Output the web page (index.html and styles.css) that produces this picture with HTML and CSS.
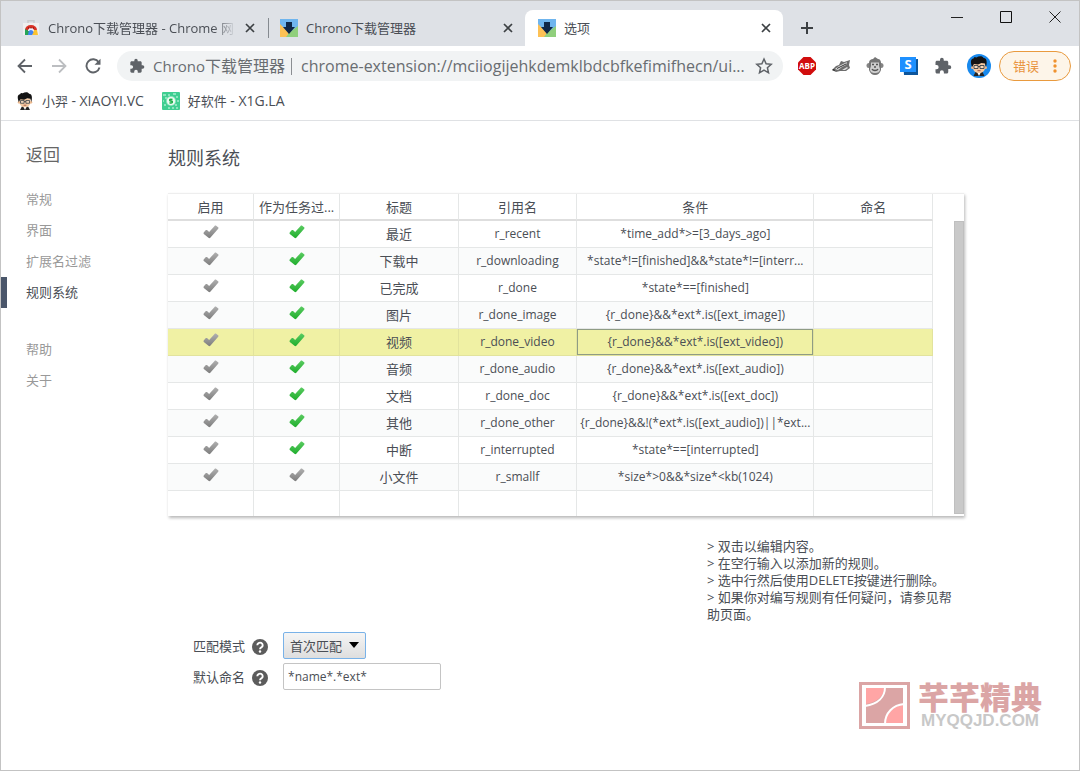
FILE: index.html
```html
<!DOCTYPE html>
<html lang="zh-CN">
<head>
<meta charset="utf-8">
<title>选项</title>
<link rel="stylesheet" href="styles.css">
</head>
<body>
<svg class="defs" aria-hidden="true">
  <defs>
    <linearGradient id="gray" x1="0" y1="0" x2="0" y2="1"><stop offset="0" stop-color="#b0b0b0"/><stop offset="1" stop-color="#7d7d7d"/></linearGradient>
    <linearGradient id="green" x1="0" y1="0" x2="0" y2="1"><stop offset="0" stop-color="#5bcb62"/><stop offset="1" stop-color="#1fae2c"/></linearGradient>
    <symbol id="tick" viewBox="0 0 16 14"><path d="M.7 7.6 2.6 5.3c.5-.5 1.2-.5 1.7-.1l1.8 1.9L11.6.9c.4-.5 1.1-.5 1.6-.1l1.9 1.5c.5.4.5 1 .1 1.5L7.3 12.7c-.5.6-1.3.6-1.8 0L.8 9c-.4-.4-.4-1-.1-1.400z"/></symbol>
    <symbol id="chrono" viewBox="0 0 18 18"><path fill="#6fb5ee" d="M0 0h18v18H0z"/><path fill="#fdc155" d="M0 5v13h7l2-4z"/><path fill="#90cf7c" d="M18 7v11H6l4-5z"/><path fill="#0f2747" d="M6 3h6v5h3l-6 7-6-7h3z"/></symbol>
    <symbol id="close" viewBox="0 0 12 12"><path d="m2 2 8 8m0-8-8 8" stroke="currentColor" stroke-width="1.7"/></symbol>
    <symbol id="puzzle" viewBox="0 0 24 24"><path fill="currentColor" d="M20.500 11H19V7c0-1.100-.9-2-2-2h-4V3.500a2.500 2.500 0 0 0-5 0V5H4c-1.100 0-2 .9-2 2v3.800h1.500a2.700 2.700 0 0 1 0 5.400H2V20c0 1.100.9 2 2 2h3.800v-1.500a2.700 2.700 0 0 1 5.400 0V22H17c1.100 0 2-.9 2-2v-4h1.500a2.500 2.500 0 0 0 0-5z"/></symbol>
    <symbol id="help" viewBox="0 0 16 16"><circle cx="8" cy="8" r="8" fill="#5c5c5c"/><path d="M5.300 6.200a2.700 2.500 0 1 1 4.300 2C8.500 9 8 9.300 8 10.200" fill="none" stroke="#fff" stroke-width="1.900"/><circle cx="8" cy="12.500" r="1.200" fill="#fff"/></symbol>
    <symbol id="face" viewBox="0 0 20 20"><path fill="#242424" d="M6.500 16h7l2 4h-11z"/><path fill="#fff" d="m8 16 2 4 2-4z"/><circle cx="3.500" cy="11.500" r="1.500" fill="#eab78d"/><circle cx="16.500" cy="11.500" r="1.500" fill="#eab78d"/><path fill="#f4c9a1" d="M4 7h12v5c0 3-3 5-6 5s-6-2-6-5z"/><path fill="#141414" d="M3 11C1 5 2 3 4.500 2.500L5.500 1l2 .4C10-.5 14-.2 14.500 2c3 0 4 3 2.500 9l-1-3.500-3.500-.5L9 8.500 5 8z"/><path fill="#f7d9bd" stroke="#26323e" stroke-width=".8" d="M5 9.500h4v3H5zm6 0h4v3h-4zM9 10.500h2"/><path d="M8.500 14.700h3" stroke="#a05648"/></symbol>
  </defs>
</svg>

<header class="chrome">
  <div class="tabstrip">
    <div class="tab">
      <svg class="fav" viewBox="0 0 18 18"><path fill="none" stroke="#c9cbce" stroke-width="1.500" d="M6 4V1.700h6V4"/><path fill="#efefef" d="M1 4h16v12H1z"/><path fill="#d93025" d="M3 11a6 5 0 0 1 12 0l-2 1H5z"/><path fill="#27a556" d="m3 10 4 2v4H3z"/><path fill="#fdc32f" d="m15 11 1 5h-6l2-5z"/><path fill="#eef3fd" d="M6 12a3 3 0 0 1 6 0z"/><path fill="#4285f4" d="M6.500 13.500a2.500 2.500 0 0 1 5 0L10 16H6z"/><path d="M6 9h1m1.500 0h1M11 9h1" stroke="#5c1712"/></svg>
      <span class="tab-title fade">Chrono下载管理器 - Chrome 网</span>
      <button class="tab-close" aria-label="关闭"><svg><use href="#close"/></svg></button>
    </div>
    <div class="tab divided">
      <svg class="fav"><use href="#chrono"/></svg>
      <span class="tab-title">Chrono下载管理器</span>
      <button class="tab-close" aria-label="关闭"><svg><use href="#close"/></svg></button>
    </div>
    <div class="tab active">
      <svg class="fav"><use href="#chrono"/></svg>
      <span class="tab-title">选项</span>
      <button class="tab-close" aria-label="关闭"><svg><use href="#close"/></svg></button>
    </div>
    <button class="new-tab" aria-label="新标签页"><svg viewBox="0 0 14 14"><path d="M7 1v12M1 7h12" stroke="#3c4043" stroke-width="2"/></svg></button>
    <div class="window-buttons">
      <button aria-label="最小化"><svg viewBox="0 0 12 12"><path d="M0 6.500h12" stroke="#222"/></svg></button>
      <button aria-label="最大化"><svg viewBox="0 0 12 12"><path d="M.5.5h11v11H.5z" fill="none" stroke="#111"/></svg></button>
      <button aria-label="关闭窗口"><svg viewBox="0 0 12 12"><path d="m.5.5 11 11m0-11-11 11" stroke="#222"/></svg></button>
    </div>
  </div>

  <div class="toolbar">
    <nav class="nav-buttons">
      <button aria-label="后退"><svg viewBox="0 0 16 16" fill="none" stroke="#5f6368" stroke-width="1.800"><path d="M15 8H2m6-6.500L1.500 8 8 14.500"/></svg></button>
      <button aria-label="前进"><svg viewBox="0 0 16 16" fill="none" stroke="#bcbec1" stroke-width="1.800"><path d="M1 8h13M8 1.500 14.500 8 8 14.500"/></svg></button>
      <button aria-label="重新加载"><svg viewBox="0 0 16 16"><path d="M13.700 4.300A6.600 6.600 0 1 0 14.500 9.500" fill="none" stroke="#5f6368" stroke-width="1.900"/><path fill="#5f6368" d="M15.500.8v6h-6z"/></svg></button>
    </nav>
    <div class="omnibox">
      <svg class="puzzle"><use href="#puzzle"/></svg>
      <span class="origin">Chrono<span class="origin-cn">下载管理器</span></span>
      <span class="bar"></span>
      <span class="url">chrome-extension://mciiogijehkdemklbdcbfkefimifhecn/ui...</span>
      <button class="star" aria-label="收藏"><svg viewBox="0 0 18 18"><path d="m9 2 2.100 4.700 5.100.6-3.800 3.400 1.100 5.100L9 13.200l-4.500 2.600 1.100-5.100-3.800-3.400 5.100-.6z" fill="none" stroke="#5f6368" stroke-width="1.500"/></svg></button>
    </div>
    <div class="extensions">
      <svg viewBox="0 0 18 18"><path fill="#d10d0d" d="M5.500 0h7L18 5.500v7L12.500 18h-7L0 12.500v-7z"/><text x="9" y="12" text-anchor="middle" class="abp">ABP</text></svg>
      <svg viewBox="0 0 18 18"><path fill="#6d6d6d" d="m0 13 4-4 3-1 2-4 3 1 6-2-1 5 1 3-4 3H8l-4 1z"/><path fill="#dcdcdc" d="m3 12 4-3 4-2 4-2-1 3-4 2-4 3zM10 13l5-3 1 1-3 2z"/><path d="m5 11.500 5-2.500 4-2" stroke="#353535"/><path fill="#222" d="m0 13 2-1 1 2z"/></svg>
      <svg viewBox="0 0 18 18"><circle cx="3" cy="8.500" r="2.500" fill="#858585"/><circle cx="15" cy="8.500" r="2.500" fill="#858585"/><path fill="#757575" d="M3 6c0-3 2-4 4-4l2-2 3 2c2 0 3 2 3 4v7c-1 3-3 5-6 5s-5-2-6-5z"/><path fill="#cfcfcf" d="M5 5.500h8V9l1 3c0 3-2 4-5 4s-5-1-5-4l1-3z"/><path d="M6 7.500h2m2 0h2M6 12c1 2 5 2 6 0M8 10h2" stroke="#555" stroke-width="1.400" fill="none"/></svg>
      <svg viewBox="0 0 18 18"><path fill="#0d559b" d="m3 3 15-1v16H4z"/><path fill="#1e90ff" d="M0 0h16v15H0z"/><text x="8" y="12" text-anchor="middle" class="s-mark">S</text></svg>
      <svg class="gray-icon"><use href="#puzzle"/></svg>
    </div>
    <span class="avatar"><svg><use href="#face"/></svg></span>
    <button class="error-menu">错误<svg viewBox="0 0 4 14" fill="#f0922f"><circle cx="2" cy="2" r="1.700"/><circle cx="2" cy="7" r="1.700"/><circle cx="2" cy="12" r="1.700"/></svg></button>
  </div>

  <nav class="bookmarks">
    <a href="#"><svg><use href="#face"/></svg><span>小羿 <span class="latin">- XIAOYI.VC</span></span></a>
    <a href="#"><svg viewBox="0 0 18 18"><rect width="18" height="18" rx="1" fill="#3fce91"/><path d="M1 3h3m3-1v2m4-2h3M3 6h2m9-1h2M1 9h1m13 0h2M2 13h2m9 0h2M6 16h2m3-1v2m3-1h2" stroke="#a5ebcb" stroke-width="1.500"/><circle cx="9" cy="9" r="5" fill="#8fe5be"/><circle cx="9" cy="9" r="4" fill="#eefbf5"/><path d="M10.500 7.500C7 6.500 7 9 9 9s2 2.500-1.500 1.700" fill="none" stroke="#19ad46" stroke-width="1.500"/></svg><span>好软件 <span class="latin">- X1G.LA</span></span></a>
  </nav>
</header>

<div class="page">
  <aside class="sidebar">
    <a class="back" href="#">返回</a>
    <nav class="menu">
      <a href="#">常规</a>
      <a href="#">界面</a>
      <a href="#">扩展名过滤</a>
      <a href="#" class="current">规则系统</a>
    </nav>
    <nav class="menu">
      <a href="#">帮助</a>
      <a href="#">关于</a>
    </nav>
  </aside>

  <main class="main">
    <h1>规则系统</h1>
    <div class="grid-box">
      <table class="rules">
        <colgroup><col class="c-flag"><col class="c-flag"><col class="c-name"><col class="c-name"><col class="c-cond"><col class="c-name"></colgroup>
        <thead><tr><th>启用</th><th>作为任务过...</th><th>标题</th><th>引用名</th><th>条件</th><th>命名</th></tr></thead>
        <tbody>
          <tr><td><svg class="off"><use href="#tick"/></svg></td><td><svg class="on"><use href="#tick"/></svg></td><td>最近</td><td class="code">r_recent</td><td class="code">*time_add*&gt;=[3_days_ago]</td><td></td></tr>
          <tr><td><svg class="off"><use href="#tick"/></svg></td><td><svg class="on"><use href="#tick"/></svg></td><td>下载中</td><td class="code">r_downloading</td><td class="code">*state*!=[finished]&amp;&amp;*state*!=[interr...</td><td></td></tr>
          <tr><td><svg class="off"><use href="#tick"/></svg></td><td><svg class="on"><use href="#tick"/></svg></td><td>已完成</td><td class="code">r_done</td><td class="code">*state*==[finished]</td><td></td></tr>
          <tr><td><svg class="off"><use href="#tick"/></svg></td><td><svg class="on"><use href="#tick"/></svg></td><td>图片</td><td class="code">r_done_image</td><td class="code">{r_done}&amp;&amp;*ext*.is([ext_image])</td><td></td></tr>
          <tr class="selected"><td><svg class="off"><use href="#tick"/></svg></td><td><svg class="on"><use href="#tick"/></svg></td><td>视频</td><td class="code">r_done_video</td><td class="code focus">{r_done}&amp;&amp;*ext*.is([ext_video])</td><td></td></tr>
          <tr><td><svg class="off"><use href="#tick"/></svg></td><td><svg class="on"><use href="#tick"/></svg></td><td>音频</td><td class="code">r_done_audio</td><td class="code">{r_done}&amp;&amp;*ext*.is([ext_audio])</td><td></td></tr>
          <tr><td><svg class="off"><use href="#tick"/></svg></td><td><svg class="on"><use href="#tick"/></svg></td><td>文档</td><td class="code">r_done_doc</td><td class="code">{r_done}&amp;&amp;*ext*.is([ext_doc])</td><td></td></tr>
          <tr><td><svg class="off"><use href="#tick"/></svg></td><td><svg class="on"><use href="#tick"/></svg></td><td>其他</td><td class="code">r_done_other</td><td class="code">{r_done}&amp;&amp;!(*ext*.is([ext_audio])||*ext...</td><td></td></tr>
          <tr><td><svg class="off"><use href="#tick"/></svg></td><td><svg class="on"><use href="#tick"/></svg></td><td>中断</td><td class="code">r_interrupted</td><td class="code">*state*==[interrupted]</td><td></td></tr>
          <tr><td><svg class="off"><use href="#tick"/></svg></td><td><svg class="off"><use href="#tick"/></svg></td><td>小文件</td><td class="code">r_smallf</td><td class="code">*size*&gt;0&amp;&amp;*size*&lt;kb(1024)</td><td></td></tr>
          <tr class="blank"><td></td><td></td><td></td><td></td><td></td><td></td></tr>
        </tbody>
      </table>
      <div class="scroll"><div class="thumb"></div></div>
    </div>

    <div class="tips">
      <p>&gt; 双击以编辑内容。</p>
      <p>&gt; 在空行输入以添加新的规则。</p>
      <p>&gt; 选中行然后使用DELETE按键进行删除。</p>
      <p>&gt; 如果你对编写规则有任何疑问，请参见帮助页面。</p>
    </div>

    <form class="settings">
      <div class="field">
        <label for="mode">匹配模式</label><svg class="help"><use href="#help"/></svg>
        <span class="select-wrap"><select id="mode"><option>首次匹配</option></select><svg class="caret" viewBox="0 0 10 6"><path d="M0 0h10L5 6z"/></svg></span>
      </div>
      <div class="field">
        <label for="naming">默认命名</label><svg class="help"><use href="#help"/></svg>
        <input id="naming" type="text" value="*name*.*ext*">
      </div>
    </form>
  </main>
</div>

<div class="watermark">
  <svg viewBox="0 0 51 47"><path fill="#dba5a5" d="M0 0h51v47H0z"/><path fill="#fff" d="M3 3h45v41H3z"/><path fill="#dba5a5" d="M7 6h37v35H7z"/><path fill="#ffa5a5" d="M7 6h18c0 8-7 14-18 16zm37 17v18H27c0-9 7-17 17-18z"/><path d="M26 5c0 10-7 17-20 19M45 22c-11 1-19 9-19 20" fill="none" stroke="#fff" stroke-width="2"/></svg>
  <div class="mark-text"><span class="mark-cn">芊芊精典</span><span class="mark-en">MYQQJD.COM</span></div>
</div>
</body>
</html>
```
FILE: styles.css
```css
* { box-sizing: border-box; }

body {
  margin: 0;
  min-height: 100vh;
  display: flex;
  flex-direction: column;
  position: relative;
  border: 1px solid #c3c3c3;
  background: #fff;
  color: #4a4e55;
  font: 13px/18px "Open Sans", "Noto Sans CJK SC", sans-serif;
}

button {
  border: 0;
  padding: 0;
  background: none;
  font: inherit;
  color: inherit;
  display: flex;
  align-items: center;
  justify-content: center;
}

a { color: inherit; text-decoration: none; }
svg { display: block; flex: none; }
.defs { position: absolute; width: 0; height: 0; }

/* Tabs */
.chrome { border-bottom: 1px solid #dfe1e4; }
.tabstrip {
  display: flex;
  align-items: flex-end;
  height: 45px;
  padding-left: 8px;
  background: #dee1e6;
}
.tab {
  display: flex;
  align-items: center;
  flex: 0 1 258px;
  min-width: 0;
  height: 36px;
  padding: 0 11px 0 13px;
  gap: 8px;
}
.tab.divided { background: linear-gradient(#858a90, #858a90) 1px 8px / 1px 20px no-repeat; }
.tab.active { background: #fff; border-radius: 8px 8px 0 0; }
.fav { width: 18px; height: 18px; }
.tab-title { flex: 1; min-width: 0; overflow: hidden; white-space: nowrap; }
.fade { -webkit-mask-image: linear-gradient(90deg, #000 88%, transparent); mask-image: linear-gradient(90deg, #000 88%, transparent); }
.tab-close { width: 12px; height: 12px; color: #3c4043; }
.tab-close svg { width: 12px; height: 12px; }
.new-tab { width: 48px; height: 36px; }
.new-tab svg { width: 14px; height: 14px; }
.window-buttons { display: flex; align-self: flex-start; margin-left: auto; }
.window-buttons button { width: 49px; height: 32px; }
.window-buttons svg { width: 12px; height: 12px; }

/* Toolbar */
.toolbar { display: flex; align-items: center; height: 40px; padding: 0 8px 0 16px; }
.nav-buttons { display: flex; gap: 18px; margin-right: 16px; }
.nav-buttons svg { width: 16px; height: 16px; }
.omnibox {
  display: flex;
  align-items: center;
  flex: 1;
  min-width: 0;
  height: 30px;
  padding: 0 10px 0 12px;
  border-radius: 15px;
  background: #f1f3f4;
  color: #696d71;
  font-size: 16px;
  line-height: 24px;
  white-space: nowrap;
}
.origin { font-size: 15px; }
.origin-cn { font-size: 16px; }
.puzzle { width: 16px; height: 16px; margin-right: 8px; color: #5f6368; }
.bar { width: 1px; height: 17px; margin: 0 9px 0 6px; background: #8b8e92; }
.url { flex: 1; min-width: 0; overflow: hidden; text-overflow: ellipsis; }
.star { margin-left: 6px; }
.star svg { width: 18px; height: 18px; }
.extensions { display: flex; gap: 16px; margin: 0 15px; }
.extensions svg { width: 18px; height: 18px; overflow: visible; }
.gray-icon { color: #5f6368; }
.abp { font: bold 8px "Open Sans", sans-serif; fill: #fff; }
.s-mark { font: bold 13px "Open Sans", sans-serif; fill: #fff; }
.avatar { width: 24px; height: 24px; margin-right: 8px; padding: 2px; border-radius: 50%; background: #1889ed; }
.avatar svg { width: 20px; height: 20px; }
.error-menu {
  gap: 14px;
  width: 72px;
  height: 30px;
  border: 1px solid #e99a3e;
  border-radius: 15px;
  background: #fdf5e9;
  color: #e9933c;
}
.error-menu svg { width: 4px; height: 14px; }

/* Bookmarks */
.bookmarks { display: flex; gap: 18px; height: 34px; padding: 0 15px 4px; }
.bookmarks a { display: flex; align-items: center; gap: 8px; }
.bookmarks svg { width: 18px; height: 18px; }
.latin { font-size: 14px; }

/* Page */
.page { display: flex; flex: 1; }
.sidebar { flex: none; width: 167px; padding-top: 22px; color: #999; }
.back { display: block; margin-bottom: 17px; padding-left: 25px; font-size: 17px; line-height: 24px; color: #666; }
.menu { display: flex; flex-direction: column; margin-bottom: 26px; }
.menu a { padding-left: 25px; line-height: 31px; }
.menu .current { padding-left: 19px; border-left: 6px solid #4a566a; color: #4a4e55; }

.main { flex: 1; min-width: 0; padding: 24px 115px 20px 0; }
h1 { margin: 0 0 21px; font-size: 18px; line-height: 27px; font-weight: 400; }

.grid-box { display: flex; box-shadow: 1px 2px 3px #b8b8b8; border-top: 1px solid #eee; }
.rules { width: calc(100% - 31px); table-layout: fixed; border-spacing: 0; text-align: center; }
.c-flag { width: 11.25%; }
.c-name { width: 15.5%; }
.c-cond { width: 31%; }
.rules th, .rules td {
  height: 27px;
  padding: 0 2px;
  border-right: 1px solid #e5e7e7;
  border-bottom: 1px solid #e5e7e7;
  font-weight: 400;
  line-height: 18px;
  overflow: hidden;
  text-overflow: ellipsis;
  white-space: nowrap;
}
.rules th { border-bottom: 2px solid #dedede; }
.rules .code { font-size: 12px; }
.rules tr:nth-child(even) td { background: #fafbfb; }
.rules .selected td { background: #f0f1a4; border-color: #e2e39d; }
.rules .selected .focus { box-shadow: inset 0 0 0 1px #8f9c84; }
.rules .blank td { height: 25px; border-bottom: 0; }
.rules svg { width: 16px; height: 14px; margin: 0 auto 5px; }
.off { fill: url(#gray); }
.on { fill: url(#green); }
.scroll { display: flex; justify-content: flex-end; flex: none; width: 31px; padding: 27px 0 2px; }
.thumb { width: 10px; background: #c9c9c9; border: 1px solid #bfbfbf; }

.tips { width: 257px; margin: 22px 0 0 auto; padding-right: 8px; line-height: 17px; }
.tips p { margin: 0; }

.settings { display: flex; flex-direction: column; gap: 4px; margin-top: 9px; padding-left: 25px; }
.field { display: flex; align-items: center; }
.help { width: 16px; height: 16px; margin: 3px 15px 0 7px; }
.select-wrap { position: relative; }
.caret { position: absolute; right: 7px; top: 10px; width: 10px; height: 6px; pointer-events: none; }
select, input { height: 27px; font: inherit; color: inherit; outline: 0; }
select {
  appearance: none;
  display: block;
  width: 83px;
  padding: 0 6px;
  border: 1px solid #79b2e8;
  border-radius: 2px;
  background: linear-gradient(#f5f5f5, #dedede);
}
input { width: 158px; padding: 0 4px; border: 1px solid #c4c4c4; border-radius: 2px; background: #fff; font-size: 12px; }

.watermark { position: absolute; right: 37px; bottom: 38px; display: flex; gap: 8px; }
.watermark svg { width: 51px; height: 47px; }
.mark-text { display: flex; flex-direction: column; align-items: center; }
.mark-cn { font: 900 31px/28px "Noto Sans CJK SC", sans-serif; color: #dba5a5; }
.mark-en { font: bold 17px/22px "Liberation Sans", sans-serif; color: #c8c8c8; }
```
